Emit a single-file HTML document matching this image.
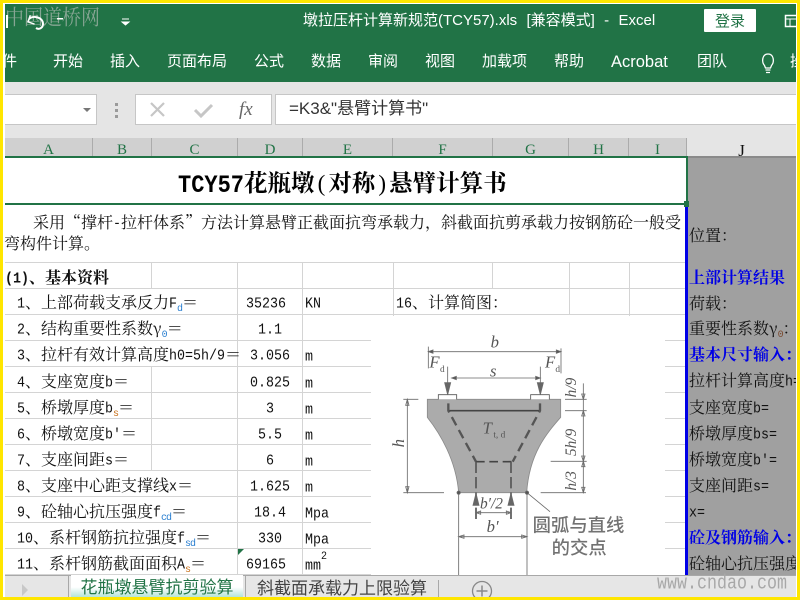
<!DOCTYPE html>
<html><head><meta charset="utf-8">
<style>
html,body{margin:0;padding:0;width:800px;height:600px;overflow:hidden;background:#fff}
#w{position:relative;width:800px;height:600px;overflow:hidden;background:#fff}
.a{position:absolute}
.t{position:absolute;white-space:nowrap;line-height:22px;height:22px;font-family:"Noto Serif CJK SC","Liberation Serif",serif;font-size:16px;color:#111}
.t i{font-family:"Liberation Mono",monospace;font-size:13.33px;font-style:normal;display:inline-block;transform:scaleY(1.14);position:relative;top:-1px}
.t b.s{font-family:"Liberation Mono",monospace;font-size:10px;font-weight:400;position:relative;top:3px;letter-spacing:-1px}
.r{position:absolute;top:51px;line-height:22px;color:#fff;font-family:"Liberation Sans","Noto Sans CJK SC",sans-serif;font-size:15px;white-space:nowrap}
.h{position:absolute;top:138px;height:18px;background:#d0d0d0;border-right:1px solid #ababab;box-sizing:border-box;text-align:center;font:15px/25px "Liberation Serif",serif;color:#217346}
.g{position:absolute;background:#d4d4d4}
.b{color:#0000e6;font-weight:700}
</style></head><body><div id="w">

<!-- ribbon -->
<div class="a" style="left:5px;top:4px;width:791px;height:78px;background:#217346"></div>
<div class="a" style="left:5px;top:82px;width:791px;height:56px;background:#e5e5e5"></div>
<div class="t" style="left:5px;top:3px;font-size:19px;line-height:24px;height:24px;color:#86a593;transform:scaleY(1.12);transform-origin:0 0">中国道桥网</div>
<svg class="a" style="left:5px;top:4px" width="130" height="30" viewBox="0 0 130 30">
<path d="M24 15 C28 11 38 13 38 20 C38 24 34 26 31 24" fill="none" stroke="#fff" stroke-width="2"/>
<path d="M24 11 V18 H31" fill="none" stroke="#fff" stroke-width="1.5" transform="rotate(20 24 15)"/>
<rect x="1" y="11" width="2" height="13" fill="#fff"/>
<rect x="52" y="14" width="6" height="1.5" fill="#fff"/>
<path d="M117 15 h7 M117 18 h7 l-3.500 3z" fill="#fff" stroke="#fff" stroke-width="1"/>
</svg>
<div class="r" style="left:303px;top:10px;font-size:15px;white-space:pre;word-spacing:.5px">墩拉压杆计算新规范(TCY57).xls  [兼容模式]  -  Excel</div>
<div class="a" style="left:704px;top:9px;width:52px;height:23px;background:#fff;border-radius:1px;text-align:center;font:15px/23px 'Noto Sans CJK SC',sans-serif;color:#217346">登录</div>
<svg class="a" style="left:784px;top:12px" width="12" height="16"><rect x="1.500" y="3.500" width="14" height="11" fill="none" stroke="#fff" stroke-width="1.500"/><path d="M1 7h14M6 7v8" stroke="#fff"/></svg>

<div class="r" style="left:2px">件</div>
<div class="r" style="left:53px">开始</div>
<div class="r" style="left:110px">插入</div>
<div class="r" style="left:167px">页面布局</div>
<div class="r" style="left:254px">公式</div>
<div class="r" style="left:311px">数据</div>
<div class="r" style="left:368px">审阅</div>
<div class="r" style="left:425px">视图</div>
<div class="r" style="left:482px">加载项</div>
<div class="r" style="left:554px">帮助</div>
<div class="r" style="left:611px;font-size:16.500px">Acrobat</div>
<div class="r" style="left:697px">团队</div>
<svg class="a" style="left:758px;top:51px" width="20" height="24"><path d="M6.500 14.500 C3.500 11 4 3 10 3 C16 3 16.500 11 13.500 14.500 L12.500 17 H7.500Z" fill="none" stroke="#fff" stroke-width="1.300"/><path d="M7.500 19h5M8 21.500h4" stroke="#fff" stroke-width="1.300"/></svg>
<div class="a" style="left:790px;top:51px;width:6px;height:22px;overflow:hidden"><span class="r" style="left:0;top:0">操</span></div>

<!-- formula bar -->
<div class="a" style="left:5px;top:94px;width:92px;height:31px;background:#fff;border:1px solid #c6c6c6;border-left:0;box-sizing:border-box"></div>
<svg class="a" style="left:80px;top:105px" width="12" height="8"><path d="M3 3h8l-4 4z" fill="#777"/></svg>
<div class="a" style="left:115px;top:103px;width:3px;height:3px;background:#9a9a9a;box-shadow:0 6px 0 #9a9a9a,0 12px 0 #9a9a9a"></div>
<div class="a" style="left:135px;top:94px;width:137px;height:31px;background:#fff;border:1px solid #c6c6c6;box-sizing:border-box"></div>
<svg class="a" style="left:135px;top:94px" width="137" height="31">
<path d="M16 9 L29 22 M29 9 L16 22" stroke="#c6c6c6" stroke-width="2.200"/>
<path d="M60 16 L66 22 L77 11" fill="none" stroke="#c6c6c6" stroke-width="3"/>
</svg>
<div class="a" style="left:239px;top:98px;font:italic 19px/24px 'Liberation Serif',serif;color:#666">fx</div>
<div class="a" style="left:275px;top:94px;width:521px;height:31px;background:#fff;border:1px solid #c6c6c6;border-right:0;box-sizing:border-box"></div>
<div class="a" style="left:289px;top:98px;font:17px/22px 'Liberation Sans','Noto Sans CJK SC',sans-serif;color:#333;white-space:nowrap">=K3&amp;"悬臂计算书"</div>

<!-- column headers -->
<div class="h" style="left:5px;width:88px">A</div>
<div class="h" style="left:93px;width:59px">B</div>
<div class="h" style="left:152px;width:86px">C</div>
<div class="h" style="left:238px;width:65px">D</div>
<div class="h" style="left:303px;width:90px">E</div>
<div class="h" style="left:393px;width:100px">F</div>
<div class="h" style="left:493px;width:76px">G</div>
<div class="h" style="left:569px;width:60px">H</div>
<div class="h" style="left:629px;width:58px">I</div>
<div class="h" style="left:687px;width:109px;background:#e5e5e5;border:0;color:#111;font-size:17px">J</div>

<!-- J column -->
<div class="a" style="left:688px;top:156px;width:108px;height:419px;background:#a0a0a0;overflow:hidden">
<div class="t" style="left:1px;top:68px">位置<span>：</span></div>
<div class="t b" style="left:1px;top:110px">上部计算结果</div>
<div class="t" style="left:1px;top:136px">荷载：</div>
<div class="t" style="left:1px;top:161px">重要性系数γ<b class="s" style="color:#7a4a30">0</b>：</div>
<div class="t b" style="left:1px;top:187px">基本尺寸输入：</div>
<div class="t" style="left:1px;top:213px">拉杆计算高度<i>h=</i></div>
<div class="t" style="left:1px;top:240px">支座宽度<i>b=</i></div>
<div class="t" style="left:1px;top:266px">桥墩厚度<i>bs=</i></div>
<div class="t" style="left:1px;top:292px">桥墩宽度<i>b'=</i></div>
<div class="t" style="left:1px;top:318px">支座间距<i>s=</i></div>
<div class="t" style="left:1px;top:344px"><i>x=</i></div>
<div class="t b" style="left:1px;top:370px">砼及钢筋输入：</div>
<div class="t" style="left:1px;top:396px">砼轴心抗压强度</div>
</div>

<!-- grid lines -->
<div class="g" style="left:5px;top:262px;width:681px;height:1px"></div>
<div class="g" style="left:5px;top:288px;width:681px;height:1px"></div>
<div class="g" style="left:5px;top:314px;width:681px;height:1px"></div>
<div class="g" style="left:5px;top:340px;width:366px;height:1px"></div>
<div class="g" style="left:5px;top:366px;width:366px;height:1px"></div>
<div class="g" style="left:5px;top:392px;width:366px;height:1px"></div>
<div class="g" style="left:5px;top:418px;width:366px;height:1px"></div>
<div class="g" style="left:5px;top:444px;width:366px;height:1px"></div>
<div class="g" style="left:5px;top:470px;width:366px;height:1px"></div>
<div class="g" style="left:5px;top:496px;width:366px;height:1px"></div>
<div class="g" style="left:5px;top:522px;width:366px;height:1px"></div>
<div class="g" style="left:5px;top:548px;width:366px;height:1px"></div>
<div class="g" style="left:5px;top:574px;width:366px;height:1px"></div>
<div class="g" style="left:665px;top:340px;width:21px;height:1px"></div>
<div class="g" style="left:665px;top:366px;width:21px;height:1px"></div>
<div class="g" style="left:665px;top:392px;width:21px;height:1px"></div>
<div class="g" style="left:665px;top:418px;width:21px;height:1px"></div>
<div class="g" style="left:665px;top:444px;width:21px;height:1px"></div>
<div class="g" style="left:665px;top:470px;width:21px;height:1px"></div>
<div class="g" style="left:665px;top:496px;width:21px;height:1px"></div>
<div class="g" style="left:665px;top:522px;width:21px;height:1px"></div>
<div class="g" style="left:665px;top:548px;width:21px;height:1px"></div>
<div class="g" style="left:151px;top:262px;width:1px;height:26px"></div>
<div class="g" style="left:151px;top:366px;width:1px;height:104px"></div>
<div class="g" style="left:237px;top:262px;width:1px;height:313px"></div>
<div class="g" style="left:302px;top:262px;width:1px;height:313px"></div>
<div class="g" style="left:393px;top:262px;width:1px;height:55px"></div>
<div class="g" style="left:492px;top:262px;width:1px;height:26px"></div>
<div class="g" style="left:569px;top:262px;width:1px;height:53px"></div>
<div class="g" style="left:629px;top:262px;width:1px;height:55px"></div>

<!-- selection + blue line -->
<div class="a" style="left:688px;top:156px;width:108px;height:2px;background:#8a8a8a"></div>
<div class="a" style="left:5px;top:156px;width:683px;height:2px;background:#217346"></div>
<div class="a" style="left:5px;top:203px;width:683px;height:2px;background:#217346"></div>
<div class="a" style="left:686px;top:156px;width:2px;height:49px;background:#217346"></div>
<div class="a" style="left:685px;top:205px;width:3px;height:370px;background:#0000e6"></div>
<div class="a" style="left:684px;top:201px;width:5px;height:6px;background:#217346"></div>

<!-- title -->
<div class="t" style="left:178px;top:165px;height:32px;line-height:32px;font-size:23.500px;font-weight:700;color:#000"><span style="display:inline-block;font-family:'Liberation Mono',monospace;font-size:22px;transform:scaleY(1.15)">TCY57</span>花瓶墩<span style="font-family:'Liberation Serif',serif;font-size:23px;font-weight:400;display:inline-block;width:13.800px;text-align:center">(</span>对称<span style="font-family:'Liberation Serif',serif;font-size:23px;font-weight:400;display:inline-block;width:13.800px;text-align:center">)</span>悬臂计算书</div>

<div class="t" style="left:33px;top:211px">采用“撑杆<i>-</i>拉杆体系”方法计算悬臂正截面抗弯承载力，斜截面抗剪承载力按钢筋砼一般受</div>
<div class="t" style="left:4px;top:232px">弯构件计算。</div>

<div class="t" style="left:5px;top:266px;font-weight:700"><i style="font-weight:700">(1)</i>、基本资料</div>

<div class="t" style="left:17px;top:291px"><i>1</i>、上部荷载支承反力<i>F</i><b class="s" style="color:#2a7fd0">d</b>＝</div>
<div class="t" style="left:17px;top:317px"><i>2</i>、结构重要性系数γ<b class="s" style="color:#2a7fd0">0</b>＝</div>
<div class="t" style="left:17px;top:343px"><i>3</i>、拉杆有效计算高度<i>h0=5h/9</i>＝</div>
<div class="t" style="left:17px;top:370px"><i>4</i>、支座宽度<i>b</i>＝</div>
<div class="t" style="left:17px;top:396px"><i>5</i>、桥墩厚度<i>b</i><b class="s" style="color:#c8701a">s</b>＝</div>
<div class="t" style="left:17px;top:422px"><i>6</i>、桥墩宽度<i>b'</i>＝</div>
<div class="t" style="left:17px;top:448px"><i>7</i>、支座间距<i>s</i>＝</div>
<div class="t" style="left:17px;top:474px"><i>8</i>、支座中心距支撑线<i>x</i>＝</div>
<div class="t" style="left:17px;top:500px"><i>9</i>、砼轴心抗压强度<i>f</i><b class="s" style="color:#2a7fd0">cd</b>＝</div>
<div class="t" style="left:17px;top:526px"><i>10</i>、系杆钢筋抗拉强度<i>f</i><b class="s" style="color:#2a7fd0">sd</b>＝</div>
<div class="t" style="left:17px;top:552px"><i>11</i>、系杆钢筋截面面积<i>A</i><b class="s" style="color:#c8701a">s</b>＝</div>

<div class="t" style="left:246px;top:291px"><i>35236</i></div>
<div class="t" style="left:258px;top:317px"><i>1.1</i></div>
<div class="t" style="left:250px;top:343px"><i>3.056</i></div>
<div class="t" style="left:250px;top:370px"><i>0.825</i></div>
<div class="t" style="left:266px;top:396px"><i>3</i></div>
<div class="t" style="left:258px;top:422px"><i>5.5</i></div>
<div class="t" style="left:266px;top:448px"><i>6</i></div>
<div class="t" style="left:250px;top:474px"><i>1.625</i></div>
<div class="t" style="left:254px;top:500px"><i>18.4</i></div>
<div class="t" style="left:258px;top:526px"><i>330</i></div>
<div class="t" style="left:246px;top:552px"><i>69165</i></div>
<svg class="a" style="left:238px;top:549px" width="7" height="7"><path d="M0 0h6L0 6z" fill="#217346"/></svg>

<div class="t" style="left:305px;top:291px"><i>KN</i></div>
<div class="t" style="left:305px;top:344px"><i>m</i></div>
<div class="t" style="left:305px;top:371px"><i>m</i></div>
<div class="t" style="left:305px;top:397px"><i>m</i></div>
<div class="t" style="left:305px;top:423px"><i>m</i></div>
<div class="t" style="left:305px;top:449px"><i>m</i></div>
<div class="t" style="left:305px;top:475px"><i>m</i></div>
<div class="t" style="left:305px;top:501px"><i>Mpa</i></div>
<div class="t" style="left:305px;top:527px"><i>Mpa</i></div>
<div class="t" style="left:305px;top:553px"><i>mm</i></div>
<div class="t" style="left:321px;top:545px;font-size:10px"><i style="font-size:10px">2</i></div>
<div class="t" style="left:396px;top:291px"><i>16</i>、计算简图：</div>

<!-- diagram -->
<svg class="a" style="left:371px;top:316px" width="294" height="259" viewBox="0 0 294 259">
<rect width="294" height="259" fill="#fff"/>
<g transform="translate(-1,4) scale(.33333)" fill="none" stroke="#6a6a6a" stroke-width="2.500" font-family="Liberation Serif,serif">
<path d="M172 238 H572 V292 C530 340 478 400 470 518 H266 C258 420 210 340 172 292 Z" fill="#ababab" stroke="#8a8a8a"/>
<path d="M205 238 V224 H260 V238 M482 238 V224 H538 V238" fill="#fff" stroke="#555"/>
<path d="M235 272 H510" stroke="#444" stroke-width="5"/>
<path d="M235 250 V272 L318 425 M510 250 V272 L428 425" stroke="#555" stroke-width="7" stroke-dasharray="28 16"/>
<path d="M318 425 H426" stroke="#444" stroke-width="5" stroke-dasharray="26 14"/>
<path d="M318 425 V602 M423 425 V602" stroke="#555" stroke-width="5" stroke-dasharray="34 12"/>
<path d="M175 80 V145 M573 85 V160 M175 95 H573 M233 140 V220 M511 140 V220 M245 174 H511" />
<path d="M175 95 l14 -5 v10z M573 95 l-14 -5 v10z M245 174 l14 -5 v10z M511 174 l-14 -5 v10z" fill="#555"/>
<path d="M233 224 l-9 -36 h18z M511 224 l-9 -36 h18z M318 520 l-9 36 h18z M423 520 l-9 36 h18z" fill="#666"/>
<path d="M100 238 H145 M112 238 V518 M100 518 H222 M512 518 H648 M112 238 l-5 18 h10z M112 518 l-5 -18 h10z" />
<path d="M585 238 H650 M585 272 H650 M542 424 H650 M640 190 V518 M640 238 l-5 -16 h10z M640 272 l-5 16 h10z M640 424 l-5 -16 h10z M640 424 l-5 16 h10z M640 518 l-5 -16 h10z"/>
<path d="M266 518 V768 M471 518 V768 M266 650 H471 M266 650 l16 -5 v10z M471 650 l-16 -5 v10z M318 578 H423 M318 578 l14 -5 v10z M423 578 l-14 -5 v10z M471 518 L540 575"/>
<circle cx="266" cy="518" r="5" fill="#555"/><circle cx="471" cy="518" r="5" fill="#555"/>
<g fill="#555" stroke="none" font-style="italic" font-size="50">
<text x="362" y="82">b</text>
<text x="360" y="170">s</text>
<text x="178" y="142">F</text><text x="210" y="156" font-size="28" font-style="normal">d</text>
<text x="525" y="142">F</text><text x="556" y="156" font-size="28" font-style="normal">d</text>
<text x="338" y="340">T</text><text x="370" y="352" font-size="28" font-style="normal">t, d</text>
<text x="350" y="636">b′</text>
<text x="330" y="565" font-size="46">b′/2</text>
<text transform="translate(102,382) rotate(-90)">h</text>
<text transform="translate(618,232) rotate(-90)" font-size="46">h/9</text>
<text transform="translate(618,408) rotate(-90)" font-size="46">5h/9</text>
<text transform="translate(618,512) rotate(-90)" font-size="46">h/3</text>
</g>
<g fill="#727272" stroke="none" font-family="Noto Sans CJK SC,sans-serif" font-size="55" font-weight="500">
<text x="488" y="634">圆弧与直线</text>
<text x="545" y="702">的交点</text>
</g>
</g>
</svg>

<!-- tab bar -->
<div class="a" style="left:5px;top:575px;width:791px;height:22px;background:#e6e6e6;border-top:1px solid #a8a8a8;box-sizing:border-box"></div>
<svg class="a" style="left:20px;top:583px" width="10" height="14"><path d="M2 1l6 6-6 6z" fill="#c8c8c8"/></svg>
<div class="a" style="left:68px;top:575px;width:1px;height:22px;background:#a8a8a8"></div>
<div class="a" style="left:71px;top:575px;width:172px;height:22px;background:linear-gradient(#fff 55%,#b4e4d8);text-align:center;font:17px/22px 'Noto Sans CJK SC',sans-serif;color:#217346;white-space:nowrap">花瓶墩悬臂抗剪验算</div>
<div class="a" style="left:245px;top:575px;width:1px;height:22px;background:#a8a8a8"></div>
<div class="a" style="left:257px;top:576px;font:17px/22px 'Noto Sans CJK SC',sans-serif;color:#444;white-space:nowrap">斜截面承载力上限验算</div>
<div class="a" style="left:438px;top:580px;width:1px;height:17px;background:#a8a8a8"></div>
<svg class="a" style="left:471px;top:580px" width="22" height="17"><circle cx="11" cy="11" r="9.500" fill="none" stroke="#888" stroke-width="1.300"/><path d="M5.500 11h11M11 5.500v11" stroke="#888" stroke-width="1.500"/></svg>
<div class="a" style="left:657px;top:574px;font:16.670px/22px 'Liberation Mono',monospace;color:#a8a8a8;white-space:nowrap;transform:scaleY(1.200)">www.cndao.com</div>

<!-- yellow frame -->
<div class="a" style="left:0;top:0;width:800px;height:3px;background:#ffe600"></div>
<div class="a" style="left:0;top:597px;width:800px;height:3px;background:#ffe600"></div>
<div class="a" style="left:0;top:0;width:3px;height:600px;background:#ffe600"></div>
<div class="a" style="left:797px;top:0;width:3px;height:600px;background:#ffe600"></div>
</div></body></html>
